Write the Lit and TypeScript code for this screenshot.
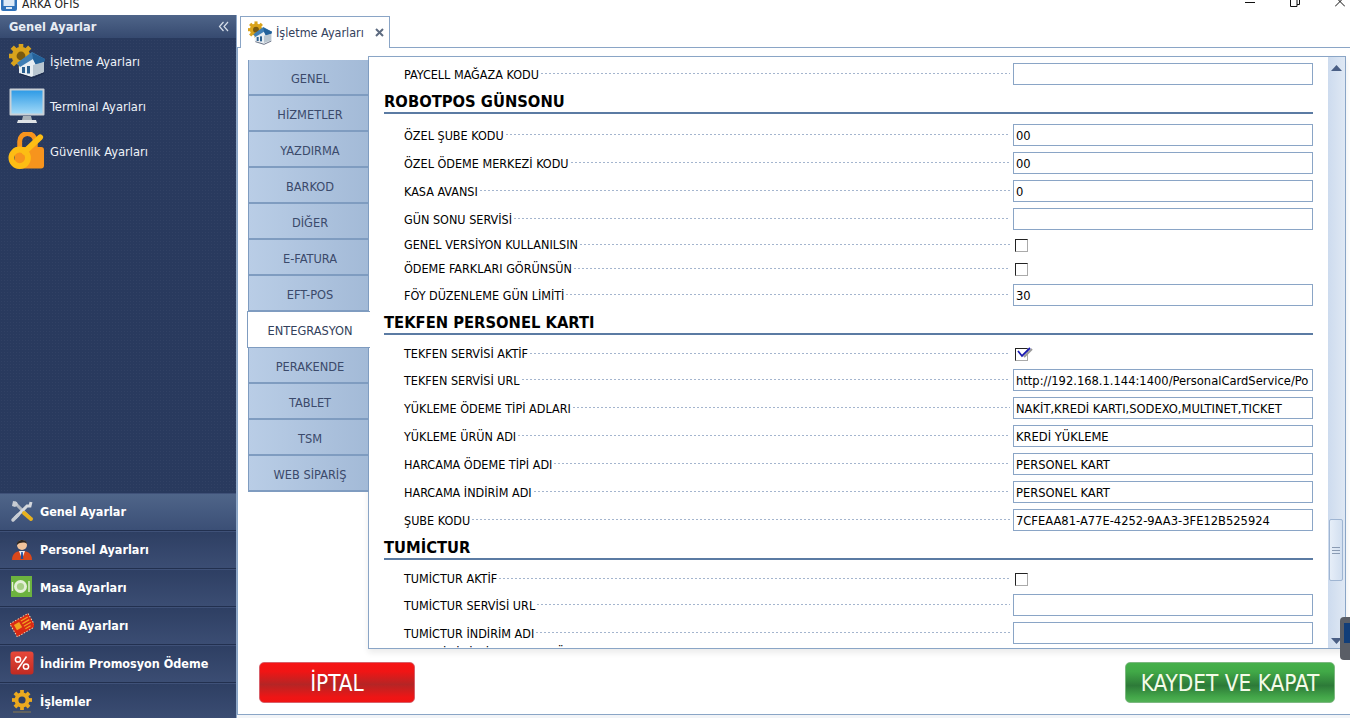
import { LitElement, html, css, svg } from "lit";
import { customElement } from "lit/decorators.js";

const gearPath = (cx: number, cy: number, r: number, fill: string, hole: string) => {
  const teeth = [];
  for (let i = 0; i < 8; i++) {
    teeth.push(svg`<rect x=${cx - r * 0.22} y=${cy - r * 1.18} width=${r * 0.44} height=${r * 0.5} fill=${fill} transform="rotate(${i * 45} ${cx} ${cy})"/>`);
  }
  return svg`${teeth}<circle cx=${cx} cy=${cy} r=${r * 0.88} fill=${fill}/><circle cx=${cx} cy=${cy} r=${r * 0.42} fill=${hole}/>`;
};

const houseGear = svg`<svg viewBox="0 0 36 34" width="36" height="34">
  ${gearPath(12, 12, 10.5, "#d9a31c", "#7a5a10")}
  <path d="M10 19 L24 10 L35 17 L35 28 L22 33 L10 29Z" fill="#e8eef2"/>
  <path d="M8 19 L23 8 L36 15 L35 18 L27 21 L24 15 L11 23Z" fill="#3f7fb5"/>
  <path d="M23 9 L36 15 L35 18 L27 21 L24 15Z" fill="#24629a"/>
  <rect x="13" y="23" width="3" height="6" fill="#2a5f8f"/><rect x="18" y="22" width="3" height="7.5" fill="#2a5f8f"/>
  <path d="M24 21 L35 18 L35 28 L24 32Z" fill="#b9c6d0"/>
  <path d="M11 30 L24 34 L35 29" stroke="#1c2a48" stroke-width="1" fill="none"/>
</svg>`;
const monitor = svg`<svg viewBox="0 0 36 36" width="36" height="36">
  <defs><linearGradient id="scr" x1="0" y1="0" x2="0" y2="1"><stop offset="0" stop-color="#2f9be6"/><stop offset="1" stop-color="#9fd8f7"/></linearGradient></defs>
  <rect x="0.5" y="0.5" width="35" height="27" rx="1" fill="#c9d0d6"/>
  <rect x="2.5" y="2.5" width="31" height="23" fill="url(#scr)"/>
  <path d="M14 28h8l1 4h-10z" fill="#a9b2b9"/><path d="M9 32h18l1 3H8z" fill="#dfe3e6"/>
</svg>`;
const keyLock = svg`<svg viewBox="0 0 38 38" width="38" height="38">
  <rect x="7" y="15" width="30" height="22" rx="3" fill="#f7941d"/>
  <path d="M12 16 V9 a8 8 0 0 1 16 0 V16" fill="none" stroke="#f7941d" stroke-width="5"/>
  <circle cx="12" cy="26" r="8.5" fill="none" stroke="#fdbd14" stroke-width="6"/>
  <path d="M17 20 L33 5" stroke="#fdbd14" stroke-width="6" stroke-linecap="round"/>
</svg>`;
const tools = svg`<svg viewBox="0 0 24 24" width="24" height="24">
  <path d="M4 3 L20 19" stroke="#aeb5bf" stroke-width="3"/>
  <path d="M3 2 l4 1 1 3 -3 2 -3 -1z" fill="#c7ccd3"/>
  <path d="M21 3 l-1 4 -3 0 -12 12" stroke="#d5d8dd" stroke-width="3" fill="none"/>
  <path d="M14 14 L21 20" stroke="#e8b21e" stroke-width="4" stroke-linecap="round"/>
  <path d="M8 16 L3 21" stroke="#c7ccd3" stroke-width="3.5" stroke-linecap="round"/>
</svg>`;
const person = svg`<svg viewBox="0 0 24 24" width="24" height="24">
  <path d="M2 23 C2 15 8 14 12 14 S22 15 22 23Z" fill="#d9481c"/>
  <path d="M9 14 L12 22 L15 14Z" fill="#e9eef5"/><path d="M11.3 15h1.4l.6 7h-2.6z" fill="#1d4e9e"/>
  <circle cx="12" cy="8" r="5" fill="#f2c49b"/>
  <path d="M7 8 C6 2 17 1 17 7 C15 5 10 5 7 8Z" fill="#2b2622"/>
</svg>`;
const plate = svg`<svg viewBox="0 0 22 22" width="22" height="22">
  <rect x="0" y="0" width="21" height="21" fill="#6cb33f"/>
  <circle cx="9.5" cy="10.5" r="6.5" fill="#e4efd8"/><circle cx="9.5" cy="10.5" r="3.6" fill="#a7cf86"/>
  <path d="M1.5 6v9M18 5v11" stroke="#e4efd8" stroke-width="1.4"/>
</svg>`;
const menuCard = svg`<svg viewBox="0 0 24 24" width="24" height="24">
  <g transform="rotate(-30 12 12)">
    <rect x="2" y="5" width="21" height="15" fill="#d92a14"/>
    <rect x="2" y="5" width="21" height="15" fill="none" stroke="#f6d9b0" stroke-width="1" stroke-dasharray="1.5 1.5"/>
    <path d="M13 8h8M13 11h8M13 14h8M13 17h6" stroke="#f2a31e" stroke-width="1.2"/>
    <rect x="5" y="8" width="6" height="6" fill="#f2a31e"/>
  </g>
</svg>`;
const percent = html`<svg viewBox="0 0 24 24" width="24" height="24">
  <defs><linearGradient id="pc" x1="0" y1="0" x2="0" y2="1"><stop offset="0" stop-color="#e8483a"/><stop offset="1" stop-color="#bf2a22"/></linearGradient></defs>
  <rect x="0.5" y="0.5" width="23" height="23" rx="3" fill="url(#pc)"/>
  <circle cx="8" cy="8.5" r="2.6" fill="none" stroke="#fff" stroke-width="1.5"/>
  <circle cx="16" cy="15.5" r="2.6" fill="none" stroke="#fff" stroke-width="1.5"/>
  <path d="M16.5 5.5 L7.5 18.5" stroke="#fff" stroke-width="1.5"/>
</svg>`;
const gear = svg`<svg viewBox="0 0 24 24" width="24" height="24">${gearPath(12, 11, 8.5, "#eba91f", "#2f3f63")}<path d="M3 23h18" stroke="#8a7a50" stroke-width="1"/></svg>`;

const ic = (t: unknown) => html`<svg-wrap class="ico">${t}</svg-wrap>`;

type Row =
  | { k: "h"; t: string }
  | { k: "i"; t: string; v?: string }
  | { k: "c"; t: string; on?: boolean };

const rows: Row[] = [
  { k: "i", t: "PAYCELL MAĞAZA KODU" },
  { k: "h", t: "ROBOTPOS GÜNSONU" },
  { k: "i", t: "ÖZEL ŞUBE KODU", v: "00" },
  { k: "i", t: "ÖZEL ÖDEME MERKEZİ KODU", v: "00" },
  { k: "i", t: "KASA AVANSI", v: "0" },
  { k: "i", t: "GÜN SONU SERVİSİ" },
  { k: "c", t: "GENEL VERSİYON KULLANILSIN" },
  { k: "c", t: "ÖDEME FARKLARI GÖRÜNSÜN" },
  { k: "i", t: "FÖY DÜZENLEME GÜN LİMİTİ", v: "30" },
  { k: "h", t: "TEKFEN PERSONEL KARTI" },
  { k: "c", t: "TEKFEN SERVİSİ AKTİF", on: true },
  { k: "i", t: "TEKFEN SERVİSİ URL", v: "http://192.168.1.144:1400/PersonalCardService/Po" },
  { k: "i", t: "YÜKLEME ÖDEME TİPİ ADLARI", v: "NAKİT,KREDİ KARTI,SODEXO,MULTINET,TICKET" },
  { k: "i", t: "YÜKLEME ÜRÜN ADI", v: "KREDİ YÜKLEME" },
  { k: "i", t: "HARCAMA ÖDEME TİPİ ADI", v: "PERSONEL KART" },
  { k: "i", t: "HARCAMA İNDİRİM ADI", v: "PERSONEL KART" },
  { k: "i", t: "ŞUBE KODU", v: "7CFEAA81-A77E-4252-9AA3-3FE12B525924" },
  { k: "h", t: "TUMİCTUR" },
  { k: "c", t: "TUMİCTUR AKTİF" },
  { k: "i", t: "TUMİCTUR SERVİSİ URL" },
  { k: "i", t: "TUMİCTUR İNDİRİM ADI" },
];

const tabs = ["GENEL", "HİZMETLER", "YAZDIRMA", "BARKOD", "DİĞER", "E-FATURA", "EFT-POS", "ENTEGRASYON", "PERAKENDE", "TABLET", "TSM", "WEB SİPARİŞ"];

@customElement("app-root")
export class AppRoot extends LitElement {
  static styles = css`
    :host { display: block; height: 718px; overflow: hidden; background: #fff; font-family: "DejaVu Sans Condensed", "DejaVu Sans", sans-serif; font-size: 12px; color: #000; }
    .page { display: flex; flex-direction: column; height: 718px; position: relative; }
    .title { height: 15px; flex: none; overflow: hidden; display: flex; align-items: flex-start; }
    .title .appico { display: block; margin-right: 5px; margin-left: 1px; }
    .title span { font-size: 12px; line-height: 12px; margin-top: -2px; color: #222; }
    .winbtns { margin-left: auto; display: flex; gap: 35px; padding-right: 5px; align-items: flex-start; }
    .winbtns svg { display: block; }
    .body { flex: 1; min-height: 0; display: flex; }
    .side { width: 236px; flex: none; display: flex; flex-direction: column; background-color: #293a5e; background-image: radial-gradient(rgba(255,255,255,.035) 1px, transparent 1px); background-size: 3px 3px; border-right: 1px solid #8fa8c8; }
    .side-h { height: 23px; flex: none; display: flex; align-items: center; justify-content: space-between; padding: 0 7px 0 9px; background: linear-gradient(#4f6589, #364a70); color: #e8edf4; font-weight: 700; font-size: 12.7px; }
    .nav { flex: 1; min-height: 0; }
    .nav-i { height: 45px; box-sizing: border-box; padding-top: 1px; display: flex; align-items: center; gap: 5px; padding-left: 8px; color: #eef2f8; font-size: 12.8px; }
    .nav-i .slot { width: 37px; height: 36px; display: flex; align-items: center; justify-content: center; flex: none; }
    .foot { height: 225px; flex: none; overflow: hidden; }
    .f-i { height: 38px; box-sizing: border-box; display: flex; align-items: center; gap: 4px; padding: 0 0 2px 10px; color: #fff; font-weight: 700; font-size: 12.5px; background: linear-gradient(#2e3f63, #3b4d73); border-bottom: 1px solid #22304f; border-top: 1px solid #3f5178; }
    .f-i.sel { background: linear-gradient(#4f6589, #3b4f76); }
    .f-i .slot { width: 24px; height: 24px; display: flex; align-items: center; justify-content: center; flex: none; margin-right: 2px; }
    svg-wrap { display: contents; }
    .main { flex: 1; min-width: 0; display: flex; flex-direction: column; background: #f2f4f7; }
    .strip { height: 32px; flex: none; box-sizing: border-box; padding: 1px 0 0 3px; display: flex; align-items: flex-start; background: #fff; }
    .tab { width: 150px; height: 32px; box-sizing: border-box; border: 1px solid #8aa5c6; border-bottom: 0; background: #fff; display: flex; align-items: center; padding-left: 7px; gap: 4px; color: #33415c; font-size: 12.5px; position: relative; z-index: 1; }
    .tab .x { margin-left: auto; margin-right: 5px; display: block; }
    .tab .mini { width: 24px; height: 24px; display: flex; }
    .tab .mini svg { width: 24px; height: 24px; }
    .content { flex: 1; min-height: 0; margin-bottom: 3px; box-sizing: border-box; background: #fff; border-top: 1px solid #8aa5c6; border-bottom: 1px solid #8aa5c6; border-left: 1px solid #8aa5c6; padding: 8px 4px 0 10px; display: flex; flex-direction: column; }
    .work { display: flex; height: 593px; flex: none; }
    .vt { width: 121px; flex: none; padding-top: 4px; display: flex; flex-direction: column; position: relative; z-index: 2; }
    .vt-i { height: 36px; box-sizing: border-box; border: 1px solid #7f9cc0; border-width: 0 1px 2px 1px; background: linear-gradient(90deg, #b9cde6, #a3bad7); display: flex; align-items: center; justify-content: center; padding: 3px 0 0 3px; color: #3b4a6b; font-size: 12.7px; }
    .vt-i.on { height: 37px; background: #fff; margin: -1px -1px 0 -1px; border-width: 1px 0 1px 1px; color: #33415c; padding: 2px 0 0 2px; }
    .panel { flex: 1; min-width: 0; margin-left: -1px; border: 1px solid #8aa5c6; display: flex; box-shadow: 0 4px 6px rgba(0,0,0,.08); background: #fff; }
    .scroll { flex: 1; min-width: 0; overflow: hidden; padding: 3px 15px 0 15px; }
    .sb { width: 17px; flex: none; background: linear-gradient(90deg, #cddbee, #dfe8f4); display: flex; flex-direction: column; align-items: center; position: relative; padding-top: 8px; box-sizing: border-box; }
    .sb .thumb { position: absolute; top: 462px; left: 1px; width: 14px; height: 62px; box-sizing: border-box; border: 1px solid #9fb5d2; border-radius: 2px; background: linear-gradient(90deg, #e6eef8, #d2dff0); display: flex; align-items: center; justify-content: center; }
    .sb .dn { position: absolute; bottom: 4px; left: 3px; }
    .row { height: 28px; display: flex; align-items: center; padding-left: 20px; }
    .row.c { height: 24px; }
    .lbl { white-space: nowrap; font-size: 12.5px; color: #000; }
    .row.c .lbl { margin-top: -1px; }
    .dots { flex: 1; min-width: 0; margin: 0 3px 0 2px; height: 1px; background: repeating-linear-gradient(90deg, #a4b5ce 0 2px, transparent 2px 4px); transform: translateY(-1px); }
    .inp { width: 300px; height: 22px; box-sizing: border-box; border: 1px solid #8aa5c6; padding: 0 2px; display: flex; align-items: center; white-space: nowrap; overflow: hidden; font-size: 12.8px; flex: none; color: #000; }
    .chk { width: 300px; flex: none; box-sizing: border-box; display: flex; padding-left: 2px; }
    .box { width: 13px; height: 13px; box-sizing: border-box; border: 1px solid; border-color: #222 #aaa #aaa #222; position: relative; }
    .box svg { position: absolute; left: 0; top: -4px; }
    .h { height: 26px; box-sizing: border-box; margin-bottom: 7px; padding-top: 2px; border-bottom: 2px solid #5b7ba3; display: flex; align-items: center; font-weight: 700; font-size: 16.4px; color: #000; }
    .cut { margin-top: -7px; height: 24px; }
    .btns { display: flex; justify-content: space-between; padding: 13px 11px 0 11px; }
    .b { height: 41px; box-sizing: border-box; border-radius: 5px; color: #fff; font-size: 22.4px; display: flex; align-items: center; justify-content: center; }
    .b.red { width: 156px; border: 1px solid #d8606a; background: linear-gradient(#f61414, #f01515 22%, #b52525 55%, #ef1515 88%, #f01414); }
    .b.grn { width: 210px; border: 1px solid #7cb880; background: linear-gradient(#45b04a, #41a947 22%, #2d7a38 58%, #44a84a 88%, #52b055); color: #f4fbe8; }
    .widget { position: absolute; left: 1340px; top: 617px; width: 12px; height: 43px; background: #5a5e66; border-radius: 4px 0 0 4px; z-index: 5; overflow: hidden; }
    .widget i { display: block; width: 8px; height: 20px; background: #123e78; margin: 6px 0 0 4px; }
  `;

  private renderRow(r: Row) {
    if (r.k === "h") return html`<div class="h">${r.t}</div>`;
    if (r.k === "c") {
      return html`<div class="row c"><span class="lbl">${r.t}</span><span class="dots"></span><div class="chk"><div class="box">${r.on
        ? html`<svg width="18" height="14" viewBox="0 0 18 14"><path d="M8 12 L16 4" stroke="#999" stroke-width="2" fill="none"/><path d="M2 6 L6 11 L14 3" stroke="#1a1ab0" stroke-width="1.8" fill="none"/></svg>`
        : ""}</div></div></div>`;
    }
    return html`<div class="row"><span class="lbl">${r.t}</span><span class="dots"></span><div class="inp">${r.v ?? ""}</div></div>`;
  }

  render() {
    const foot: [string, unknown, boolean][] = [
      ["Genel Ayarlar", tools, true],
      ["Personel Ayarları", person, false],
      ["Masa Ayarları", plate, false],
      ["Menü Ayarları", menuCard, false],
      ["İndirim Promosyon Ödeme", percent, false],
      ["İşlemler", gear, false],
    ];
    return html`<div class="page">
      <div class="title">
        <svg class="appico" width="16" height="11" viewBox="0 0 16 11"><rect x="0" y="-4" width="16" height="15" rx="2" fill="#2f72ba"/><rect x="2.5" y="-2" width="11" height="8" fill="#dce9f6"/><rect x="5" y="7" width="6" height="2" fill="#dce9f6"/></svg>
        <span>ARKA OFİS</span>
        <div class="winbtns">
          <svg width="10" height="5" viewBox="0 0 10 5"><path d="M0 2.5h10" stroke="#111"/></svg>
          <svg width="10" height="8" viewBox="0 0 10 8"><path d="M.5 0v6.5h6.5V0M7 4.5h2.5V0" stroke="#111" fill="none"/></svg>
          <svg width="10" height="8" viewBox="0 0 10 8"><path d="M0 6.5L7 -.5M3 -.5L10 6.5" stroke="#111" fill="none"/></svg>
        </div>
      </div>
      <div class="body">
        <aside class="side">
          <div class="side-h"><span>Genel Ayarlar</span>
            <svg width="11" height="11" viewBox="0 0 11 11"><path d="M5.5 1 L1.5 5.5 L5.5 10M10 1 L6 5.5 L10 10" stroke="#d6deea" stroke-width="1.2" fill="none"/></svg>
          </div>
          <div class="nav">
            <div class="nav-i"><span class="slot">${ic(houseGear)}</span>İşletme Ayarları</div>
            <div class="nav-i"><span class="slot">${ic(monitor)}</span>Terminal Ayarları</div>
            <div class="nav-i"><span class="slot">${ic(keyLock)}</span>Güvenlik Ayarları</div>
          </div>
          <div class="foot">
            ${foot.map(([t, i, s]) => html`<div class="f-i ${s ? "sel" : ""}"><span class="slot">${ic(i)}</span>${t}</div>`)}
          </div>
        </aside>
        <main class="main">
          <div class="strip">
            <div class="tab"><span class="mini">${ic(houseGear)}</span>İşletme Ayarları
              <svg class="x" width="9" height="9" viewBox="0 0 9 9"><path d="M1 1l7 7M8 1l-7 7" stroke="#5d6b80" stroke-width="2"/></svg>
            </div>
          </div>
          <div class="content">
            <div class="work">
              <div class="vt">${tabs.map((t) => html`<div class="vt-i ${t === "ENTEGRASYON" ? "on" : ""}">${t}</div>`)}</div>
              <div class="panel">
                <div class="scroll">
                  ${rows.map((r) => this.renderRow(r))}
                  <div class="row cut"><span class="lbl">ASGARİ LİMİTLİ KOŞULSUZ ÖDEME KODU</span></div>
                </div>
                <div class="sb">
                  <svg width="11" height="6" viewBox="0 0 11 6"><path d="M5.5 0L11 6H0z" fill="#4a5f85"/></svg>
                  <div class="thumb"><svg width="8" height="7" viewBox="0 0 8 7"><path d="M0 .5h8M0 3.5h8M0 6.5h8" stroke="#8a9bb3"/></svg></div>
                  <svg class="dn" width="11" height="6" viewBox="0 0 11 6"><path d="M5.5 6L11 0H0z" fill="#4a5f85"/></svg>
                </div>
              </div>
            </div>
            <div class="btns"><div class="b red">İPTAL</div><div class="b grn">KAYDET VE KAPAT</div></div>
          </div>
        </main>
      </div>
      <div class="widget"><i></i></div>
    </div>`;
  }
}
